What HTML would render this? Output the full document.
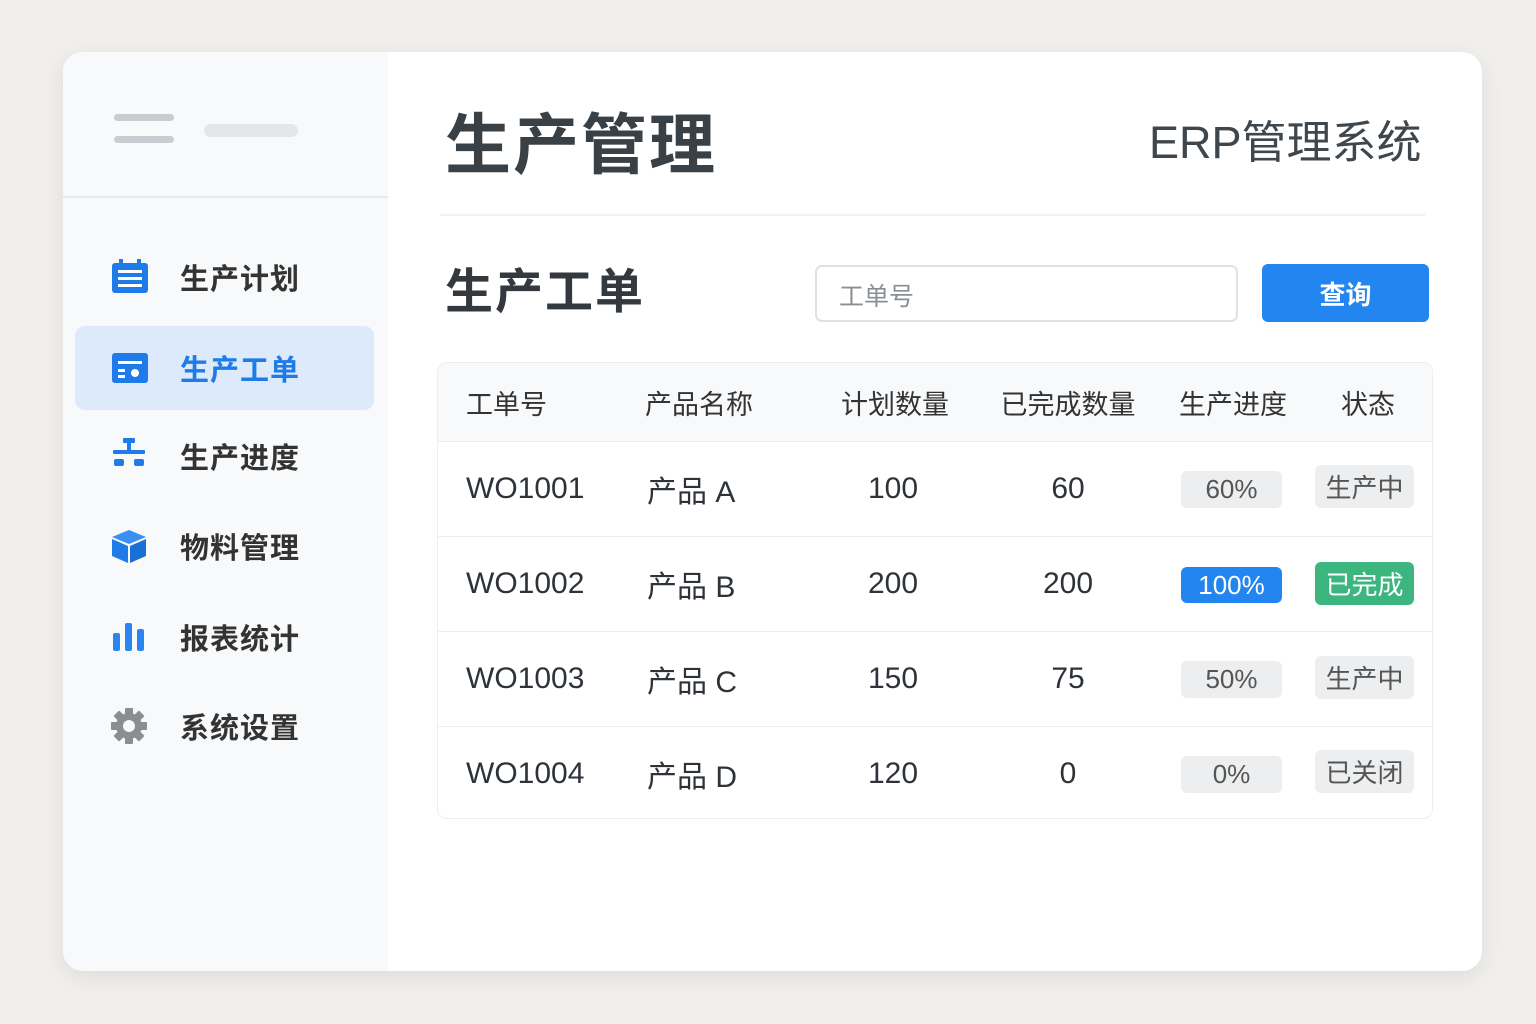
<!DOCTYPE html>
<html><head><meta charset="utf-8"><style>
*{margin:0;padding:0;box-sizing:border-box}
body{width:1536px;height:1024px;background:#f0efec;font-family:"Liberation Sans","Noto Sans CJK SC",sans-serif;position:relative;overflow:hidden;color:#333}
.card{position:absolute;left:63px;top:52px;width:1419px;height:919px;background:#fff;border-radius:20px;overflow:hidden;box-shadow:0 6px 24px rgba(0,0,0,.08)}
.side{position:absolute;left:0;top:0;width:325px;height:100%;background:#f8f9fa}
.abs{position:absolute}
.nav{position:absolute;left:0;width:325px;height:84px;display:flex;align-items:center}
.nav .ic{position:absolute;left:46px;top:22px;width:40px;height:40px}
.nav span{position:absolute;left:117px;font-size:29px;font-weight:bold;color:#333;letter-spacing:1px}
.row{position:absolute;left:0;width:995px;height:95px;border-top:1px solid #eceef0;font-size:30px;color:#2d3338}
.row div,.hd div{position:absolute;top:0;height:100%;display:flex;align-items:center}
.c{justify-content:center}
.pill{position:absolute;display:flex;align-items:center;justify-content:center;border-radius:6px;background:#eceef0;color:#555;font-size:26px}
</style></head><body>
<div class="card">
 <div class="side">
  <div class="abs" style="left:51px;top:62px;width:60px;height:7px;border-radius:4px;background:#c9ccd0"></div>
  <div class="abs" style="left:51px;top:84px;width:60px;height:7px;border-radius:4px;background:#c9ccd0"></div>
  <div class="abs" style="left:141px;top:72px;width:94px;height:13px;border-radius:7px;background:#e4e7ea"></div>
  <div class="abs" style="left:0;top:144px;width:325px;height:2px;background:#e6e8ea"></div>
  <div class="nav" style="top:183px"><svg class="ic" viewBox="0 0 40 40"><rect x="3" y="6" width="36" height="30" rx="3" fill="#1e7be8"/><rect x="10" y="2" width="4" height="8" fill="#1e7be8"/><rect x="28" y="2" width="4" height="8" fill="#1e7be8"/><rect x="9" y="13" width="24" height="3" fill="#fff"/><rect x="9" y="20" width="24" height="3" fill="#fff"/><rect x="9" y="27" width="24" height="3" fill="#fff"/></svg><span>生产计划</span></div>
  <div class="abs" style="left:12px;top:274px;width:299px;height:84px;border-radius:10px;background:#dceafc"></div>
  <div class="nav" style="top:274px"><svg class="ic" viewBox="0 0 40 40"><rect x="3" y="5" width="36" height="30" rx="3" fill="#1e7be8"/><rect x="9" y="13" width="24" height="3" fill="#fff"/><rect x="9" y="21" width="7" height="3" fill="#fff"/><rect x="9" y="27" width="7" height="3" fill="#fff"/><circle cx="26" cy="25" r="4" fill="#fff"/></svg><span style="color:#1e7be8">生产工单</span></div>
  <div class="nav" style="top:362px"><svg class="ic" viewBox="0 0 40 40"><rect x="14" y="2" width="12" height="5" rx="1" fill="#1e7be8"/><rect x="18" y="6" width="4" height="10" fill="#1e7be8"/><rect x="4" y="14" width="32" height="4" rx="1" fill="#1e7be8"/><rect x="5" y="23" width="10" height="7" rx="2" fill="#1e7be8"/><rect x="25" y="23" width="10" height="7" rx="2" fill="#1e7be8"/></svg><span>生产进度</span></div>
  <div class="nav" style="top:452px"><svg class="ic" viewBox="0 0 40 40"><path d="M20 4 L37 11 L20 18 L3 11Z" fill="#3a8ff0"/><path d="M3 13 L19 20 L19 37 L3 30Z" fill="#1e7be8"/><path d="M37 13 L21 20 L21 37 L37 30Z" fill="#1a6fd6"/></svg><span>物料管理</span></div>
  <div class="nav" style="top:543px"><svg class="ic" viewBox="0 0 40 40"><rect x="4" y="16" width="7" height="18" rx="2" fill="#2a85f0"/><rect x="16" y="6" width="7" height="28" rx="2" fill="#2a85f0"/><rect x="28" y="12" width="7" height="22" rx="2" fill="#2a85f0"/></svg><span>报表统计</span></div>
  <div class="nav" style="top:632px"><svg class="ic" viewBox="0 0 40 40"><g fill="#8a8e93"><circle cx="20" cy="20" r="13"/><g transform="translate(20 20)"><rect x="-4" y="-18" width="8" height="36" rx="1"/><rect x="-4" y="-18" width="8" height="36" rx="1" transform="rotate(45)"/><rect x="-4" y="-18" width="8" height="36" rx="1" transform="rotate(90)"/><rect x="-4" y="-18" width="8" height="36" rx="1" transform="rotate(135)"/></g></g><circle cx="20" cy="20" r="6" fill="#f8f9fa"/></svg><span>系统设置</span></div>
 </div>
 <div class="abs" style="left:382px;top:40px;font-size:66px;font-weight:bold;color:#394147;letter-spacing:2px">生产管理</div>
 <div class="abs" style="left:1086px;top:54px;font-size:45px;color:#3f474d">ERP管理系统</div>
 <div class="abs" style="left:377px;top:162px;width:985px;height:2px;background:#f0f1f2"></div>
 <div class="abs" style="left:382px;top:200px;font-size:48px;font-weight:bold;color:#33393e;letter-spacing:2px">生产工单</div>
 <div class="abs" style="left:752px;top:213px;width:423px;height:57px;border:2px solid #dfe1e4;border-radius:7px;font-size:25px;color:#8a8f94;padding:10px 0 0 22px">工单号</div>
 <div class="abs" style="left:1199px;top:212px;width:167px;height:58px;background:#2385f0;border-radius:6px;color:#fff;font-size:26px;font-weight:bold;display:flex;align-items:center;justify-content:center">查询</div>
 <div class="abs" style="left:374px;top:310px;width:996px;height:457px;border:1px solid #eceef0;border-radius:10px;overflow:hidden">
  <div class="hd abs" style="left:0;top:0;width:996px;height:78px;background:#f8f9fa;font-size:27px;color:#333">
   <div style="left:28px">工单号</div><div style="left:207px">产品名称</div>
   <div class="c" style="left:390px;width:134px">计划数量</div><div class="c" style="left:555px;width:150px">已完成数量</div>
   <div class="c" style="left:725px;width:140px">生产进度</div><div class="c" style="left:880px;width:100px">状态</div>
  </div>
  <div class="row" style="top:78px"><div style="left:28px">WO1001</div><div style="left:209px">产品 A</div><div class="c" style="left:390px;width:130px">100</div><div class="c" style="left:565px;width:130px">60</div>
   <div class="pill" style="left:743px;top:29px;width:101px;height:37px">60%</div><div class="pill" style="left:877px;top:23px;width:99px;height:43px">生产中</div></div>
  <div class="row" style="top:173px"><div style="left:28px">WO1002</div><div style="left:209px">产品 B</div><div class="c" style="left:390px;width:130px">200</div><div class="c" style="left:565px;width:130px">200</div>
   <div class="pill" style="left:743px;top:30px;width:101px;height:36px;background:#2385f0;color:#fff">100%</div><div class="pill" style="left:877px;top:25px;width:99px;height:43px;background:#3cb57e;color:#fff">已完成</div></div>
  <div class="row" style="top:268px"><div style="left:28px">WO1003</div><div style="left:209px">产品 C</div><div class="c" style="left:390px;width:130px">150</div><div class="c" style="left:565px;width:130px">75</div>
   <div class="pill" style="left:743px;top:29px;width:101px;height:37px">50%</div><div class="pill" style="left:877px;top:24px;width:99px;height:43px">生产中</div></div>
  <div class="row" style="top:363px"><div style="left:28px">WO1004</div><div style="left:209px">产品 D</div><div class="c" style="left:390px;width:130px">120</div><div class="c" style="left:565px;width:130px">0</div>
   <div class="pill" style="left:743px;top:29px;width:101px;height:37px">0%</div><div class="pill" style="left:877px;top:23px;width:99px;height:43px">已关闭</div></div>
 </div>
</div>
</body></html>
